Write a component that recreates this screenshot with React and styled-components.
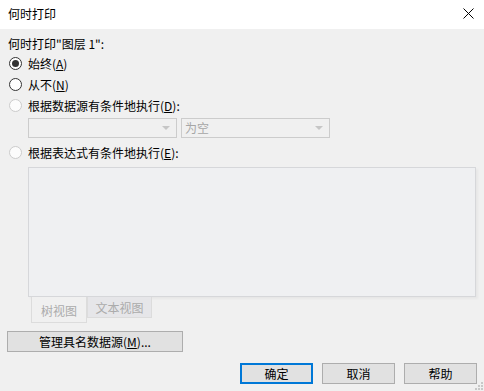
import React from 'react';
import styled, { createGlobalStyle } from 'styled-components';

const Global = createGlobalStyle`
  html, body {
    margin: 0;
    padding: 0;
    background: #f0f0f0;
  }
  body {
    font-family: "Noto Sans CJK SC", "Noto Sans", "Liberation Sans", sans-serif;
    font-size: 12px;
    color: #000;
  }
`;

const Window = styled.div`
  position: relative;
  width: 484px;
  height: 391px;
  background: #f0f0f0;
  display: flex;
  flex-direction: column;
  overflow: hidden;
`;

const TitleBar = styled.div`
  height: 29px;
  background: #fff;
  display: flex;
  align-items: center;
  justify-content: space-between;
  padding: 0 10px 2px 8px;
  box-sizing: border-box;
  flex-shrink: 0;
`;

const Title = styled.span`
  font-size: 12px;
  line-height: 16px;
`;

const Body = styled.div`
  display: flex;
  flex-direction: column;
  padding: 0 8px;
`;

const Label = styled.div`
  margin-top: 7px;
  height: 16px;
  line-height: 16px;
`;

const RadioRow = styled.div`
  display: flex;
  align-items: center;
  height: 21px;
  margin-top: ${({ gap }) => gap || 0}px;
  line-height: 16px;
`;

const Circle = styled.span`
  width: 13px;
  height: 13px;
  box-sizing: border-box;
  border-radius: 50%;
  margin-left: 1px;
  margin-right: 6px;
  border: 1px solid ${({ disabled }) => (disabled ? '#cccccc' : '#333333')};
  background: ${({ disabled }) => (disabled ? '#fcfcfc' : '#ffffff')};
  display: flex;
  align-items: center;
  justify-content: center;

  &::after {
    content: '';
    display: ${({ checked }) => (checked ? 'block' : 'none')};
    width: 7px;
    height: 7px;
    border-radius: 50%;
    background: #333;
  }
`;

const Key = styled.u`
  text-underline-offset: 1px;
`;

const ComboRow = styled.div`
  display: flex;
  gap: 4px;
  margin-top: 2px;
  margin-left: 20px;
`;

const Combo = styled.div`
  width: 149px;
  height: 20px;
  box-sizing: border-box;
  border: 1px solid #cccccc;
  background: #f0f0f0;
  display: flex;
  align-items: center;
  justify-content: space-between;
  padding: 0 6px 0 3px;
  color: #a6a6a6;
  line-height: 16px;
`;

const Arrow = styled.span`
  width: 0;
  height: 0;
  border-left: 4px solid transparent;
  border-right: 4px solid transparent;
  border-top: 4px solid #c6c6c6;
`;

const ExprBox = styled.div`
  margin-top: 4px;
  margin-left: 20px;
  width: 448px;
  height: 130px;
  box-sizing: border-box;
  border: 1px solid #d6d7da;
  background: #eff0f2;
  box-shadow: 2px 2px 2px rgba(0, 0, 0, 0.04);
`;

const Tabs = styled.div`
  display: flex;
  align-items: flex-start;
  margin-left: 23px;
  height: 26px;
`;

const Tab = styled.div`
  height: ${({ active }) => (active ? 26 : 21)}px;
  width: ${({ w }) => w}px;
  box-sizing: border-box;
  border: 1px solid #dcdcdc;
  border-top: none;
  background: ${({ active }) => (active ? '#f0f0f0' : '#e6e6e9')};
  color: #ababab;
  display: flex;
  align-items: center;
  justify-content: center;
  padding-top: ${({ active }) => (active ? 2 : 0)}px;
`;

const Button = styled.button`
  font-family: inherit;
  font-size: 12px;
  color: #000;
  height: 21px;
  width: ${({ w }) => w || 73}px;
  box-sizing: border-box;
  background: #e1e1e1;
  border: ${({ primary }) => (primary ? '2px solid #0078d7' : '1px solid #adadad')};
  padding: 0;
  line-height: 16px;
  margin: 0;
`;

const ManageButton = styled(Button)`
  margin-top: 8px;
  margin-left: -1px;
`;

const Footer = styled.div`
  display: flex;
  justify-content: flex-end;
  gap: 9px;
  margin-top: 11px;
  padding-right: 7px;
`;

const Grip = styled.svg`
  position: absolute;
  right: 1px;
  bottom: 1px;
`;

function Radio({ checked, disabled, gap, children }) {
  return (
    <RadioRow gap={gap}>
      <Circle checked={checked} disabled={disabled} />
      <span>{children}</span>
    </RadioRow>
  );
}

export default function App() {
  return (
    <Window>
      <Global />
      <TitleBar>
        <Title>何时打印</Title>
        <svg width="11" height="11" viewBox="0 0 11 11">
          <path d="M0.5 0.5 L10.5 10.5 M10.5 0.5 L0.5 10.5" stroke="#000" strokeWidth="1" />
        </svg>
      </TitleBar>
      <Body>
        <Label>何时打印"图层 1":</Label>
        <Radio checked gap={1}>始终(<Key>A</Key>)</Radio>
        <Radio>从不(<Key>N</Key>)</Radio>
        <Radio disabled>根据数据源有条件地执行(<Key>D</Key>):</Radio>
        <ComboRow>
          <Combo><span /><Arrow /></Combo>
          <Combo><span>为空</span><Arrow /></Combo>
        </ComboRow>
        <Radio disabled gap={4}>根据表达式有条件地执行(<Key>E</Key>):</Radio>
        <ExprBox />
        <Tabs>
          <Tab active w={56}>树视图</Tab>
          <Tab w={65}>文本视图</Tab>
        </Tabs>
        <ManageButton w={176}>管理具名数据源(<Key>M</Key>)...</ManageButton>
      </Body>
      <Footer>
        <Button primary>确定</Button>
        <Button>取消</Button>
        <Button>帮助</Button>
      </Footer>
      <Grip width="8" height="8" viewBox="0 0 8 8">
        <rect x="6" y="0" width="2" height="2" fill="#c8c8c8" />
        <rect x="3" y="3" width="2" height="2" fill="#c8c8c8" />
        <rect x="6" y="3" width="2" height="2" fill="#c8c8c8" />
        <rect x="0" y="6" width="2" height="2" fill="#c8c8c8" />
        <rect x="3" y="6" width="2" height="2" fill="#c8c8c8" />
        <rect x="6" y="6" width="2" height="2" fill="#c8c8c8" />
      </Grip>
    </Window>
  );
}
